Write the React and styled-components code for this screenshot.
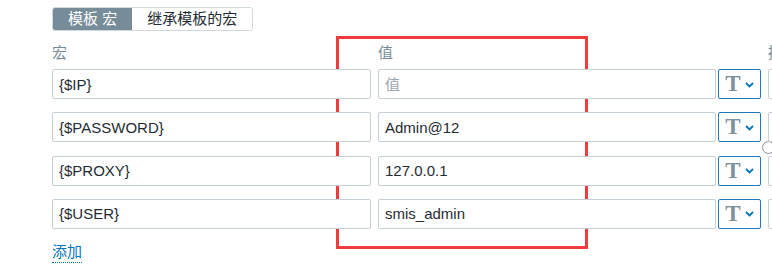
import React from "react";
import styled, { createGlobalStyle } from "styled-components";

const macros = [
  { name: "{$IP}", value: "" },
  { name: "{$PASSWORD}", value: "Admin@12" },
  { name: "{$PROXY}", value: "127.0.0.1" },
  { name: "{$USER}", value: "smis_admin" },
];

export default function App() {
  return (
    <>
      <Global />
      <Page>
        <Tabs>
          <Tab $active>模板 宏</Tab>
          <Tab>继承模板的宏</Tab>
        </Tabs>
        <HeaderRow>
          <Label>宏</Label>
          <Label>值</Label>
          <Label>描述</Label>
        </HeaderRow>
        <Rows>
          {macros.map((m) => (
            <Row key={m.name}>
              <Field value={m.name} readOnly />
              <ValueGroup>
                <Field value={m.value} placeholder="值" readOnly />
                <TypeButton>
                  <span>T</span>
                  <svg width="9" height="6" viewBox="0 0 9 6">
                    <polyline points="1,1 4.5,4.5 8,1" fill="none" stroke="#0275b8" strokeWidth="1.8" />
                  </svg>
                </TypeButton>
              </ValueGroup>
              <DescField readOnly />
            </Row>
          ))}
          <Knob />
        </Rows>
        <AddLink>添加</AddLink>
        <Highlight />
      </Page>
    </>
  );
}

const Global = createGlobalStyle`
  body {
    margin: 0;
    background: #fff;
    overflow: hidden;
    font-family: "Liberation Sans", "Noto Sans CJK SC", sans-serif;
  }
`;

const Page = styled.div`
  position: relative;
  width: 772px;
  height: 265px;
  overflow: hidden;
  padding: 7px 0 0 52px;
  box-sizing: border-box;
  font-size: 15px;
  line-height: 18px;
`;

const Tabs = styled.div`
  display: inline-flex;
  height: 24px;
  border: 1px solid #cfd8dc;
  border-radius: 3px;
  box-sizing: border-box;
  overflow: hidden;
`;

const Tab = styled.div`
  display: flex;
  align-items: center;
  padding: 0 15px;
  background: ${(p) => (p.$active ? "#768d99" : "#fff")};
  color: ${(p) => (p.$active ? "#fff" : "#1f2c33")};
  white-space: nowrap;
`;

const HeaderRow = styled.div`
  display: grid;
  grid-template-columns: 319px 383px 240px;
  column-gap: 7px;
  margin-top: 13px;
  height: 18px;
`;

const Label = styled.div`
  color: #768d99;
  white-space: nowrap;
`;

const Rows = styled.div`
  position: relative;
  display: flex;
  flex-direction: column;
  gap: 13.33px;
  margin-top: 7px;
`;

const Row = styled.div`
  display: grid;
  grid-template-columns: 319px 383px 240px;
  column-gap: 7px;
  height: 30px;
`;

const Field = styled.input`
  position: relative;
  z-index: 1;
  box-sizing: border-box;
  height: 30px;
  width: 100%;
  margin: 0;
  padding: 0 6px;
  border: 1px solid #c5d0d6;
  border-radius: 2px;
  background: #fff;
  color: #1f2c33;
  font: inherit;
  outline: none;

  &::placeholder {
    color: #9aa7ae;
  }
`;

const DescField = styled(Field)``;

const ValueGroup = styled.div`
  display: flex;
  gap: 2px;

  ${Field} {
    flex: 1;
    min-width: 0;
  }
`;

const TypeButton = styled.div`
  flex: 0 0 43px;
  box-sizing: border-box;
  height: 30px;
  border: 1px solid #1f79b8;
  border-radius: 2px;
  background: #fff;
  display: flex;
  align-items: center;
  justify-content: center;
  gap: 4px;

  span {
    font-family: "Liberation Serif", serif;
    font-size: 23px;
    font-weight: 700;
    line-height: 22px;
    color: #7d929d;
  }

  svg {
    margin-top: 1px;
  }
`;

const Knob = styled.div`
  position: absolute;
  left: 710px;
  top: 72px;
  width: 11px;
  height: 11px;
  border: 1px solid #8a8f93;
  border-radius: 50%;
  background: #fff;
`;

const AddLink = styled.span`
  display: inline-block;
  margin-top: 14px;
  color: #0275b8;
  border-bottom: 1px dotted #0275b8;
  padding-bottom: 1px;
  cursor: pointer;
`;

const Highlight = styled.div`
  position: absolute;
  left: 336px;
  top: 36px;
  width: 252px;
  height: 213px;
  box-sizing: border-box;
  border: 3px solid #f23b3b;
  pointer-events: none;
`;
